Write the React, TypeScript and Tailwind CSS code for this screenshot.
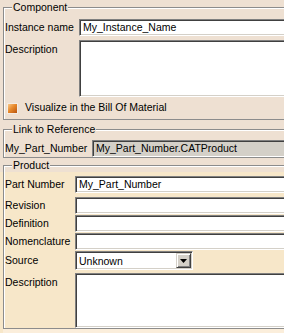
import React from 'react';

const sunken =
  'border-t border-l border-t-[#808080] border-l-[#808080] border-b border-r border-b-white border-r-white shadow-[inset_1px_1px_0_#404040,inset_-1px_-1px_0_#d4d0c8]';

const Heading = ({ title }: { title: string }) => (
  <div className="flex h-[14px]">
    <div className="mt-[7px] h-[7px] w-[9px] border-l border-t border-[#8c8c8c] shadow-[inset_1px_1px_0_#fff]" />
    <span className="px-[1px] leading-[14px]">{title}</span>
    <div className="mt-[7px] h-[2px] flex-1 border-t border-[#8c8c8c] bg-white" />
  </div>
);

const Field = ({
  label,
  value = '',
  labelW,
  gray = false,
}: {
  label: string;
  value?: string;
  labelW: string;
  gray?: boolean;
}) => (
  <div className="flex h-[17px] items-center">
    <div className={`${labelW} shrink-0 pl-[1px] whitespace-nowrap`}>{label}</div>
    <div
      className={`h-[17px] flex-1 ${sunken} ${gray ? 'bg-[#d4d0c8]' : 'bg-white'} pl-[3px] leading-[15px] whitespace-nowrap`}
    >
      {value}
    </div>
  </div>
);

const App = () => {
  return (
    <div className="h-[333px] w-[284px] overflow-hidden bg-[#eee0d2] font-['Liberation_Sans',Arial,sans-serif] text-[10.5px] text-black">
      <div className="w-[330px]">
        {/* Component */}
        <div className="pl-[3px]">
          <Heading title="Component" />
          <div className="border-b border-l border-[#8c8c8c] pb-[5px] shadow-[inset_1px_0_0_#fff]">
            <div className="pt-[5px]">
              <Field label="Instance name" value="My_Instance_Name" labelW="w-[75px]" />
            </div>
            <div className="mt-[4px] flex">
              <div className="w-[75px] shrink-0 pl-[1px] pt-[2px]">Description</div>
              <div className={`h-[57px] flex-1 bg-white ${sunken}`} />
            </div>
            <div className="mt-[5px] flex h-[12px] items-center">
              <div className="ml-[3px] h-[11px] w-[11px] border border-[#f4ece4] bg-[linear-gradient(135deg,#f8c88a_0%,#e88a2c_45%,#b85410_100%)]" />
              <span className="ml-[7px] whitespace-nowrap">Visualize in the Bill Of Material</span>
            </div>
          </div>
        </div>

        {/* Link to Reference */}
        <div className="mt-[2px] pl-[3px]">
          <Heading title="Link to Reference" />
          <div className="border-b border-l border-[#8c8c8c] shadow-[inset_1px_0_0_#fff]">
            <div className="pt-[4px]">
              <Field label="My_Part_Number" value="My_Part_Number.CATProduct" labelW="w-[88px]" gray />
            </div>
          </div>
        </div>

        {/* Product */}
        <div className="pl-[3px]">
          <Heading title="Product" />
        </div>
        <div className="bg-[#f7e7c9] pl-[3px]">
          <div className="border-b border-l border-[#8c8c8c] shadow-[inset_1px_0_0_#fff]">
            <div className="flex flex-col gap-[1px] pt-[4px]">
              <Field label="Part Number" value="My_Part_Number" labelW="w-[71px]" />
              <div className="mt-[3px]">
                <Field label="Revision" labelW="w-[71px]" />
              </div>
              <Field label="Definition" labelW="w-[71px]" />
              <Field label="Nomenclature" labelW="w-[71px]" />
              <div className="flex h-[19px] items-center">
                <div className="w-[71px] shrink-0 pl-[1px]">Source</div>
                <div className={`flex h-[19px] w-[118px] items-center bg-white ${sunken} pl-[3px]`}>
                  <span className="flex-1 pt-[2px]">Unknown</span>
                  <div className="mr-[1px] flex h-[15px] w-[15px] items-center justify-center border-t border-l border-b border-r border-t-[#d4d0c8] border-l-[#d4d0c8] border-b-[#404040] border-r-[#404040] bg-[#d4d0c8] shadow-[inset_1px_1px_0_#fff,inset_-1px_-1px_0_#808080]">
                    <svg width="7" height="4" viewBox="0 0 7 4">
                      <path d="M0 0h7L3.5 4z" fill="#000" />
                    </svg>
                  </div>
                </div>
              </div>
              <div className="mt-[2px] flex">
                <div className="w-[71px] shrink-0 pl-[1px] pt-[2px]">Description</div>
                <div className={`h-[55px] flex-1 bg-white ${sunken}`} />
              </div>
            </div>
          </div>
          <div className="h-[10px] bg-[#fbeedb]" />
        </div>
      </div>
    </div>
  );
};

export default App;
